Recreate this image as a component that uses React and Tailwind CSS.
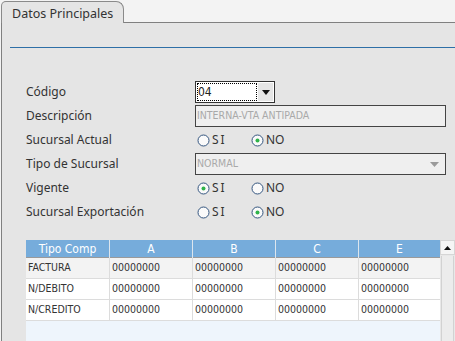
import React from "react";

const labelFont = { fontFamily: '"Noto Sans", "Open Sans", sans-serif' };
const tahoma = { fontFamily: '"DejaVu Sans Condensed", "Liberation Sans", sans-serif' };

function Radio({ checked, label }) {
    return (
        <div className="flex items-center w-[54px]">
            <svg width="13" height="13" viewBox="0 0 13 13">
                <circle cx="6.5" cy="6.5" r="5.5" fill="#fafafa" stroke="#34557f" strokeWidth="1" />
                {checked && <circle cx="6.5" cy="6.5" r="2" fill="#2fb34a" />}
            </svg>
            <span className={`ml-[2px] text-[12px] text-[#333] ${label === "SI" ? "tracking-[2px]" : ""}`} style={labelFont}>{label}</span>
        </div>
    );
}

function Row({ label, children }) {
    return (
        <div className="flex items-center h-[24px]">
            <div className="w-[169px] text-[12px] text-[#333]" style={labelFont}>{label}</div>
            <div className="flex items-center">{children}</div>
        </div>
    );
}

const rows = [
    { tipo: "FACTURA", bg: "bg-[#f3f3f3]" },
    { tipo: "N/DEBITO", bg: "bg-white" },
    { tipo: "N/CREDITO", bg: "bg-white" },
];

export default function App() {
    return (
        <div className="w-[455px] h-[341px] bg-[#f3f3f3] overflow-hidden flex flex-col">
            {/* tab strip */}
            <div className="flex h-[23px] shrink-0">
                <div className="ml-[1px] w-[123px] mt-[1px] border border-b-0 border-[#8a8a8a] rounded-tl-[5px] rounded-tr-[8px] bg-[#e5e5e5] pl-[10px] pt-[3px] text-[12.5px] text-[#333]" style={labelFont}>
                    Datos Principales
                </div>
                <div className="flex-1 border-b border-[#808080]"></div>
            </div>

            {/* panel */}
            <div className="flex-1 ml-[1px] border-l border-[#808080] bg-[#e5e5e5] flex flex-col">
                <div className="mt-[24px] ml-[8px] h-[1px] bg-[#2e6fa7]"></div>

                <div className="mt-[32px] pl-[24px]">
                    <Row label="Código">
                        <div className="w-[80px] h-[22px] border border-[#333] bg-white flex items-center p-[1px]">
                            <div className="flex-1 h-full border border-dotted border-black text-[12px] leading-none flex items-center text-[#222]" style={tahoma}>04</div>
                            <div className="w-[15px] h-full bg-[#e6e6e6] flex items-center justify-center ml-[1px]">
                                <svg width="8" height="5" viewBox="0 0 8 5"><path d="M0 0 H8 L4 5 Z" fill="#111" /></svg>
                            </div>
                        </div>
                    </Row>
                    <Row label="Descripción">
                        <div className="w-[251px] h-[22px] border border-[#444] bg-[#efefef] flex items-center pl-[1px] text-[10.5px] text-[#a9a9a9]" style={tahoma}>
                            INTERNA-VTA ANTIPADA
                        </div>
                    </Row>
                    <Row label="Sucursal Actual">
                        <div className="flex pl-[2px]">
                            <Radio label="SI" />
                            <Radio label="NO" checked />
                        </div>
                    </Row>
                    <Row label="Tipo de Sucursal">
                        <div className="w-[251px] h-[22px] border border-[#444] bg-[#efefef] flex items-center justify-between pl-[1px] pr-[6px] text-[10.5px] text-[#a9a9a9]" style={tahoma}>
                            NORMAL
                            <svg width="9" height="5" viewBox="0 0 9 5"><path d="M0 0 H9 L4.5 5 Z" fill="#9a9a9a" /></svg>
                        </div>
                    </Row>
                    <Row label="Vigente">
                        <div className="flex pl-[2px]">
                            <Radio label="SI" checked />
                            <Radio label="NO" />
                        </div>
                    </Row>
                    <Row label="Sucursal Exportación">
                        <div className="flex pl-[2px]">
                            <Radio label="SI" />
                            <Radio label="NO" checked />
                        </div>
                    </Row>
                </div>

                {/* grid */}
                <div className="mt-[16px] pl-[24px] flex flex-1">
                    <div className="w-[414px] flex flex-col bg-[#eef5fc]">
                        <div className="grid grid-cols-[84px_83px_83px_83px_1fr] h-[18px] bg-[#76acdb] border-b border-[#9a9a9a] text-white text-[12px]" style={tahoma}>
                            {["Tipo Comp", "A", "B", "C", "E"].map((h, i) => (
                                <div key={h} className={`flex items-center justify-center ${i < 4 ? "border-r border-[#dde6ee]" : ""}`}>{h}</div>
                            ))}
                        </div>
                        {rows.map(r => (
                            <div key={r.tipo} className={`grid grid-cols-[84px_83px_83px_83px_1fr] h-[21px] ${r.bg} border-b border-[#dcdcdc] text-[10.5px] text-[#333]`} style={tahoma}>
                                <div className="flex items-center pl-[2px] border-r border-[#dcdcdc]">{r.tipo}</div>
                                {[0, 1, 2, 3].map(i => (
                                    <div key={i} className={`flex items-center pl-[2px] ${i < 3 ? "border-r border-[#dcdcdc]" : ""}`}>00000000</div>
                                ))}
                            </div>
                        ))}
                    </div>
                    {/* scrollbar */}
                    <div className="w-[15px] flex flex-col bg-[#e8e8e8]">
                        <div className="h-[15px] bg-[#f5f5f5] border border-[#d6d6d6] flex items-center justify-center">
                            <svg width="7" height="4" viewBox="0 0 7 4"><path d="M0 4 H7 L3.5 0 Z" fill="#111" /></svg>
                        </div>
                        <div className="flex-1 mt-[1px] mx-[1px] border-x border-[#d2d2d2] bg-[#ececec]"></div>
                    </div>
                </div>
            </div>
        </div>
    );
}
